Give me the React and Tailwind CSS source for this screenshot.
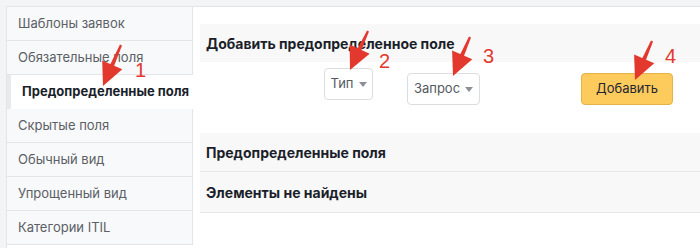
import React from 'react';

const tabs = [
  'Шаблоны заявок',
  'Обязательные поля',
  'Предопределенные поля',
  'Скрытые поля',
  'Обычный вид',
  'Упрощенный вид',
  'Категории ITIL',
];

const ACTIVE = 2;

// стрелки-пометки поверх скриншота
const arrows = [
  { x1: 121, y1: 45, x2: 103, y2: 86, n: '1', tx: 135, ty: 77 },
  { x1: 368, y1: 31, x2: 350, y2: 70, n: '2', tx: 379, ty: 68 },
  { x1: 470, y1: 37, x2: 453, y2: 76, n: '3', tx: 483, ty: 63 },
  { x1: 652, y1: 41, x2: 635, y2: 80, n: '4', tx: 665, ty: 63 },
];

const RED = '#e3382d';

const Arrow = ({ x1, y1, x2, y2 }) => {
  const dx = x2 - x1;
  const dy = y2 - y1;
  const len = Math.hypot(dx, dy);
  const ux = dx / len;
  const uy = dy / len;
  const L = 23;
  const W = 11;
  const bx = x2 - ux * L;
  const by = y2 - uy * L;
  const head = `${x2},${y2} ${bx - uy * W},${by + ux * W} ${bx + uy * W},${by - ux * W}`;
  // древко чуть сужается к хвосту
  const t = 1.1;
  const h = 2.2;
  const ex = bx + ux * 4;
  const ey = by + uy * 4;
  const shaft = `${x1 - uy * t},${y1 + ux * t} ${x1 + uy * t},${y1 - ux * t} ${ex + uy * h},${ey - ux * h} ${ex - uy * h},${ey + ux * h}`;
  return (
    <g>
      <polygon points={shaft} fill={RED} />
      <polygon points={head} fill={RED} />
    </g>
  );
};

const Caret = () => (
  <svg width="8" height="5" viewBox="0 0 8 5" className="ml-[5px]">
    <path d="M0 0h8L4 5z" fill="#8d9096" />
  </svg>
);

const App = () => {
  return (
    <div className="relative w-[700px] h-[248px] overflow-hidden bg-[#f3f4f6] pt-[6px] pl-[6px]" style={{ fontFamily: 'Inter, "Noto Sans", sans-serif' }}>
      <div className="flex h-full bg-white border-t border-l border-[#e3e5e8]">
        {/* вкладки */}
        <div className="w-[193px] shrink-0 flex flex-col">
          {tabs.map((t, i) =>
            i === ACTIVE ? (
              <div key={t} className="h-[34px] flex items-center bg-white border-l-4 border-[#e9eaec] pl-[11px] text-[13px] font-bold text-[#1b1f2a] whitespace-nowrap">
                {t}
              </div>
            ) : (
              <div key={t} className="w-[186px] h-[34px] flex items-center bg-[#f8f9fa] border-b border-r border-[#e3e5e8] pl-[11px] text-[13px] text-[#5b5f66] whitespace-nowrap">
                {t}
              </div>
            )
          )}
        </div>

        {/* содержимое */}
        <div className="flex-1 pt-[17px]">
          <div className="h-[38px] flex items-center bg-[#f8f8f9] pl-[6px] text-[14px] font-bold text-[#1b1f2a]">
            Добавить предопределенное поле
          </div>
          <div className="flex items-start h-[71px]">
            <button className="ml-[124px] mt-[6px] h-[32px] w-[49px] flex items-center justify-center border border-[#dcdde0] rounded-[4px] bg-white text-[13px] text-[#555a61]">
              Тип
              <Caret />
            </button>
            <button className="ml-[34px] mt-[11px] h-[32px] w-[73px] flex items-center justify-center border border-[#dcdde0] rounded-[4px] bg-white text-[13px] text-[#555a61]">
              Запрос
              <Caret />
            </button>
            <button className="ml-[101px] mt-[11px] h-[32px] w-[92px] flex items-center justify-center border border-[#e5b24a] rounded-[4px] bg-[#fdca5c] text-[13px] text-[#1e2733]">
              Добавить
            </button>
          </div>
          <div className="h-[39px] flex items-center bg-[#f8f8f9] border-b border-[#e6e7e9] pl-[6px] text-[14px] font-bold text-[#1b1f2a]">
            Предопределенные поля
          </div>
          <div className="h-[41px] flex items-center bg-[#f8f8f9] border-b border-[#e6e7e9] pl-[6px] text-[14px] font-bold text-[#1b1f2a]">
            Элементы не найдены
          </div>
        </div>
      </div>

      <svg className="absolute inset-0 pointer-events-none" width="700" height="248">
        {arrows.map((a) => (
          <g key={a.n}>
            <Arrow {...a} />
            <text x={a.tx} y={a.ty} fill={RED} fontSize="20" fontFamily='"Liberation Sans", Arial, sans-serif'>
              {a.n}
            </text>
          </g>
        ))}
      </svg>
    </div>
  );
};

export default App;
